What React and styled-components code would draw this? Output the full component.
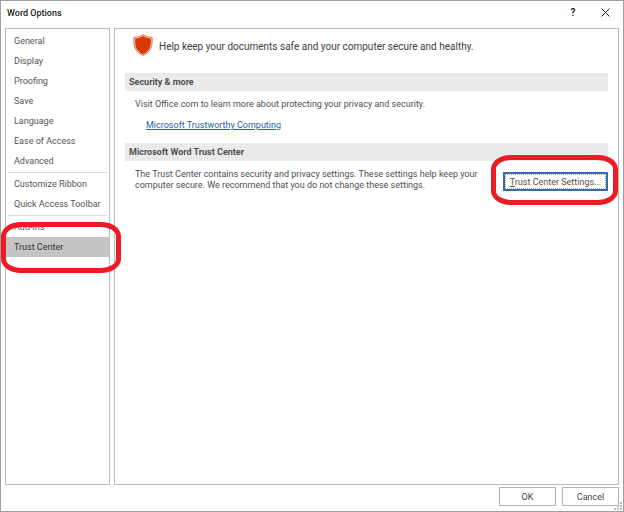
import React, { useState } from "react";
import styled, { createGlobalStyle } from "styled-components";

const groups = [
  ["General", "Display", "Proofing", "Save", "Language", "Ease of Access", "Advanced"],
  ["Customize Ribbon", "Quick Access Toolbar"],
  ["Add-ins", "Trust Center"],
];

const App = () => {
  const [page, setPage] = useState("Trust Center");

  return (
    <>
      <GlobalStyle />
      <Window>
        <TitleBar>
          <Title>Word Options</Title>
          <TitleButton aria-label="Help">?</TitleButton>
          <TitleButton aria-label="Close">
            <svg width="9" height="9" viewBox="0 0 9 9" fill="none" stroke="#222">
              <path d="M0.5 0.5L8.5 8.5M8.5 0.5L0.5 8.5" />
            </svg>
          </TitleButton>
        </TitleBar>

        <Body>
          <Nav>
            {groups.map((items) => (
              <Group key={items[0]}>
                {items.map((item) => (
                  <Slot key={item}>
                    <NavItem $active={item === page} onClick={() => setPage(item)}>
                      {item}
                    </NavItem>
                    {item === "Trust Center" && <NavRing />}
                  </Slot>
                ))}
              </Group>
            ))}
          </Nav>

          <Content>
            <Intro>
              <Shield />
              <IntroText>Help keep your documents safe and your computer secure and healthy.</IntroText>
            </Intro>

            <Heading>Security &amp; more</Heading>
            <Section>
              <Text>Visit Office.com to learn more about protecting your privacy and security.</Text>
              <Link href="#trustworthy">Microsoft Trustworthy Computing</Link>
            </Section>

            <Heading>Microsoft Word Trust Center</Heading>
            <SettingsRow>
              <Text>
                The Trust Center contains security and privacy settings. These settings help keep your
                computer secure. We recommend that you do not change these settings.
              </Text>
              <Slot>
                <SettingsButton>
                  <u>T</u>rust Center Settings...
                </SettingsButton>
                <ButtonRing />
              </Slot>
            </SettingsRow>
          </Content>
        </Body>

        <Footer>
          <Button>OK</Button>
          <Button>Cancel</Button>
        </Footer>
        <Grip width="8" height="8" viewBox="0 0 8 8" fill="#bdbdbd">
          <path d="M6 0h2v2h-2zM3 3h2v2h-2zM6 3h2v2h-2zM0 6h2v2h-2zM3 6h2v2h-2zM6 6h2v2h-2z" />
        </Grip>
      </Window>
    </>
  );
};

const Shield = () => (
  <svg width="20" height="22" viewBox="0 0 21 22" preserveAspectRatio="none">
    <path
      d="M10.5 0.5C8 2.4 4.5 3.2 1 3.2C0.4 11 1.2 17.5 10.5 21.5C19.8 17.5 20.6 11 20 3.2C16.5 3.2 13 2.4 10.5 0.5Z"
      fill="#f3c3b0"
      stroke="#e07a58"
    />
    <path
      d="M10.5 2C8.2 3.6 5.5 4.3 2.3 4.4C2 11.5 2.9 16.7 10.5 20.2C18.1 16.7 19 11.5 18.7 4.4C15.5 4.3 12.8 3.6 10.5 2Z"
      fill="#d83b01"
    />
  </svg>
);

export default App;

const GlobalStyle = createGlobalStyle`
  * {
    box-sizing: border-box;
  }
  body {
    margin: 0;
    background-color: white;
    font-family: Roboto, "Open Sans", sans-serif;
    font-size: 9px;
    color: #505050;
  }
  button {
    font: inherit;
    color: inherit;
    cursor: pointer;
  }
`;
const Window = styled.div`
  position: relative;
  min-height: 100vh;
  border: 1px solid #a0a0a0;
  padding: 0 4px 5px;
  display: flex;
  flex-direction: column;
`;
const TitleBar = styled.header`
  height: 27px;
  padding: 0 0 4px 2px;
  display: flex;
  align-items: center;
  color: #222;
`;
const Title = styled.h1`
  flex: 1;
  margin: 0;
  font-size: 9px;
  font-weight: 500;
`;
const TitleButton = styled.button`
  width: 36px;
  height: 20px;
  padding: 0;
  border: none;
  background-color: transparent;
  display: flex;
  justify-content: center;
  align-items: center;
  font-size: 10px;
  font-weight: 600;

  &:last-child {
    width: 28px;
  }
`;
const Body = styled.div`
  flex: 1;
  display: flex;
  gap: 4px;
`;
const Nav = styled.nav`
  width: 105px;
  flex-shrink: 0;
  padding-top: 2px;
  border: 1px solid #bcbcbc;
`;
const Group = styled.div`
  & + &::before {
    content: "";
    display: block;
    height: 1px;
    margin: 1px 2px;
    background-color: #dcdcdc;
  }
`;
const Slot = styled.div`
  position: relative;
`;
const NavItem = styled.button`
  display: block;
  width: 100%;
  height: 20px;
  padding: 0 8px;
  border: none;
  background-color: ${({ $active }) => ($active ? "#c5c5c5" : "transparent")};
  color: ${({ $active }) => ($active ? "#333" : "#555")};
  text-align: left;
  white-space: nowrap;
`;
const Ring = styled.span`
  position: absolute;
  z-index: 1;
  border: 5px solid #ed1c24;
  border-radius: 20px / 14px;
  pointer-events: none;
`;
const NavRing = styled(Ring)`
  inset: -15px -12px -16px -5px;
`;
const ButtonRing = styled(Ring)`
  inset: -14px -10px -14px -12px;
`;
const Content = styled.main`
  flex: 1;
  padding: 5px 10px;
  border: 1px solid #bcbcbc;
`;
const Intro = styled.div`
  padding-left: 8px;
  margin-bottom: 17px;
  display: flex;
  align-items: center;
  gap: 6px;
`;
const IntroText = styled.p`
  margin: 0;
  padding-top: 2px;
  font-size: 10px;
  color: #404040;
`;
const Heading = styled.h2`
  margin: 0;
  height: 18px;
  padding: 0 4px;
  background-color: #eaeaea;
  font-size: 9px;
  line-height: 18px;
  font-weight: 700;
`;
const Section = styled.section`
  padding: 8px 10px 12px;
`;
const Text = styled.p`
  margin: 0;
  flex: 1;
  line-height: 11px;
`;
const Link = styled.a`
  display: table;
  margin: 10px 0 0 11px;
  line-height: 11px;
  color: #2b5fa5;
`;
const SettingsRow = styled.section`
  padding: 8px 0 0 10px;
  display: flex;
  align-items: flex-start;
  gap: 24px;
`;
const SettingsButton = styled.button`
  display: block;
  width: 105px;
  height: 19px;
  margin-top: 3px;
  padding: 0;
  border: 2px solid #3d68ad;
  background-color: white;
  outline: 1px dotted #aaa;
  outline-offset: -3px;
  white-space: nowrap;
`;
const Footer = styled.footer`
  padding-top: 2px;
  display: flex;
  justify-content: flex-end;
  gap: 6px;
`;
const Button = styled.button`
  width: 57px;
  height: 19px;
  padding: 0;
  border: 1px solid #b4b4b4;
  background-color: white;
  color: #444;
`;
const Grip = styled.svg`
  position: absolute;
  right: 1px;
  bottom: 1px;
`;
